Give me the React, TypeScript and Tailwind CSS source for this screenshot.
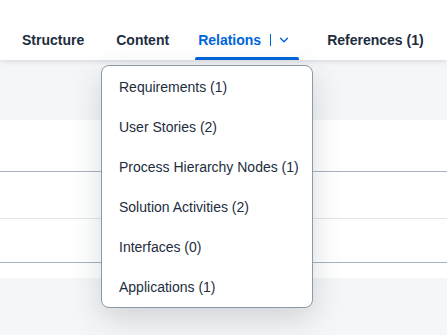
import { ChevronDown } from "lucide-react";

const items = [
  "Requirements (1)",
  "User Stories (2)",
  "Process Hierarchy Nodes (1)",
  "Solution Activities (2)",
  "Interfaces (0)",
  "Applications (1)",
];

export default function App() {
  return (
    <div className="relative w-[447px] h-[335px] overflow-hidden bg-[#f5f6f7] font-['Liberation_Sans',Arial,sans-serif]">
      {/* tab header */}
      <header className="relative z-10 h-[60px] bg-white shadow-[0_2px_4px_rgba(34,53,72,0.12)]">
        <nav className="flex h-full items-stretch pl-[22px] pt-[20px] text-[14px] font-bold text-[#1d2d3e]">
          <div className="flex items-center">Structure</div>
          <div className="ml-[32px] flex items-center">Content</div>
          <div className="relative ml-[26px] flex items-center pl-[3px] pr-[8px] text-[#0064d9]">
            <span>Relations</span>
            <span className="ml-[9px] h-[12px] w-px bg-[#0064d9]" />
            <ChevronDown className="ml-[6px] h-[14px] w-[14px]" strokeWidth={2.4} />
            <span className="absolute bottom-0 left-0 right-0 h-[3px] rounded-t-[2px] bg-[#0064d9]" />
          </div>
          <div className="ml-[28px] flex items-center">References (1)</div>
        </nav>
      </header>

      {/* page content behind */}
      <div className="h-[60px]" />
      <div className="bg-white">
        <div className="h-[52px] border-b border-[#a8b3bd]" />
        <div className="h-[47px] border-b border-[#e5e5e5]" />
        <div className="h-[44px] border-b border-[#a8b3bd]" />
        <div className="h-[15px]" />
      </div>

      {/* dropdown menu */}
      <div className="absolute left-[101px] top-[65px] z-20 w-[212px] rounded-[8px] border border-[#8c9aa8] bg-white pt-px shadow-[0_10px_30px_rgba(34,53,72,0.18)]">
        {items.map((t) => (
          <div key={t} className="flex h-[40px] items-center pl-[17px] text-[14px] text-[#1d2d3e]">
            {t}
          </div>
        ))}
      </div>
    </div>
  );
}
